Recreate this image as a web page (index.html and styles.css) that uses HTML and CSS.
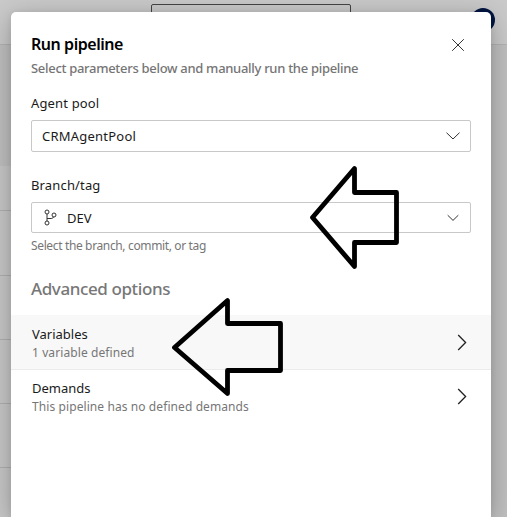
FILE: index.html
```html
<!DOCTYPE html>
<html lang="en">
<head>
<meta charset="utf-8">
<title>Run pipeline</title>
<link rel="stylesheet" href="styles.css">
</head>
<body>
<div class="page">
  <div class="topbar"><div class="search"></div><div class="avatar"></div></div>
  <div class="band"></div>
  <div class="line first"></div>
  <div class="line second"></div>
  <div class="line"></div>
  <div class="line"></div>
  <div class="line"></div>
  <div class="rest"></div>
</div>
<main class="panel">
  <header class="head">
    <div>
      <h1>Run pipeline</h1>
      <p class="subtitle">Select parameters below and manually run the pipeline</p>
    </div>
    <svg class="close" width="14" height="14" viewBox="0 0 14 14"><path d="M1.2 1.2L12.8 12.8M12.8 1.2L1.2 12.8"/></svg>
  </header>
  <section class="field">
    <label>Agent pool</label>
    <div class="select">
      <span class="pool">CRMAgentPool</span>
      <svg class="chevron" width="14" height="8" viewBox="0 0 14 8"><path d="M.5 .7L7 7L13.5 .7"/></svg>
    </div>
  </section>
  <section class="field second">
    <label>Branch/tag</label>
    <div class="select short">
      <svg class="git" width="13" height="17" viewBox="0 0 13 17"><circle cx="3" cy="3" r="2"/><circle cx="3" cy="14" r="2"/><circle cx="10" cy="6" r="2"/><path d="M3 5V12M3 9.5H7.2Q9 9.5 9.5 8"/></svg>
      <span class="dev">DEV</span>
      <svg class="chevron small" width="12" height="8" viewBox="0 0 12 8"><path d="M.7 1.2L6 6.4L11.3 1.2"/></svg>
    </div>
    <p class="help">Select the branch, commit, or tag</p>
  </section>
  <h2>Advanced options</h2>
  <div class="row active">
    <div><p class="name">Variables</p><p class="note">1 variable defined</p></div>
    <svg class="next" width="10" height="17" viewBox="0 0 10 17"><path d="M1.2 1L8.6 8.5L1.2 16"/></svg>
  </div>
  <div class="row">
    <div><p class="name">Demands</p><p class="note">This pipeline has no defined demands</p></div>
    <svg class="next" width="10" height="17" viewBox="0 0 10 17"><path d="M1.2 1L8.6 8.5L1.2 16"/></svg>
  </div>
</main>
<svg class="arrows" width="507" height="517" viewBox="0 0 507 517">
  <path d="M312.5 217.5L354.5 168.5V192.5H396.5V242.5H354.5V266.5Z"/>
  <path d="M174.5 347.5L227.5 300.5V323.5H280.5V370.5H227.5V393.5Z"/>
</svg>
</body>
</html>
```
FILE: styles.css
```css
* { box-sizing: border-box; }
body {
  margin: 0;
  width: 507px;
  height: 517px;
  overflow: hidden;
  position: relative;
  color: #1a1a1a;
  font: 13px/20px "Noto Sans", "Open Sans", sans-serif;
}
h1, h2, p { margin: 0; font-weight: 400; }
svg { fill: none; display: block; flex: none; }

.page { height: 517px; background: #c0c0c0; }
.topbar {
  height: 45px;
  display: flex;
  padding-left: 151px;
  background: #cacaca;
  border-bottom: 1px solid #b3b3b3;
}
.search {
  width: 200px;
  height: 30px;
  margin-top: 4px;
  border: 1px solid #444;
  border-radius: 2px;
}
.avatar {
  width: 24px;
  height: 24px;
  margin: 8px 0 0 120px;
  border-radius: 50%;
  background: #001642;
}
.band { height: 121px; }
.line { width: 240px; height: 64px; border-bottom: 1px solid #b0b0b0; background: #c8c8c8; }
.line.first { height: 45px; }
.line.second { height: 65px; }
.rest { width: 240px; height: 49px; background: #c8c8c8; }

.panel {
  position: absolute;
  left: 11px;
  top: 12px;
  width: 480px;
  height: 505px;
  padding-top: 22px;
  background: #fff;
  border-radius: 5px 5px 0 0;
  box-shadow: 0 6px 28px rgba(0, 0, 0, .28), 0 1px 6px rgba(0, 0, 0, .08);
}
.head { display: flex; justify-content: space-between; padding: 0 26px 0 20px; }
h1 { font-size: 16px; font-weight: 600; letter-spacing: -.45px; color: #000; }
.subtitle { margin-top: 4px; font-weight: 500; color: #757575; letter-spacing: -.3px; white-space: nowrap; }
.close { margin-top: 4px; stroke: #333; stroke-width: 1; }

.field { padding: 0 20px; margin-top: 15px; }
.field.second { margin-top: 23px; }
label { display: block; letter-spacing: .15px; }
.select {
  display: flex;
  align-items: center;
  height: 32px;
  margin-top: 7px;
  padding: 0 10px;
  border: 1px solid #c8c8c8;
  border-radius: 2px;
}
.select.short { height: 31px; padding-left: 12px; }
.pool { letter-spacing: .22px; }
.chevron { margin-left: auto; stroke: #333; stroke-width: 1; }
.chevron.small { margin-right: 1px; }
.git { stroke: #333; stroke-width: 1; margin-right: 10px; }
.help { margin-top: 5px; font-size: 12px; line-height: 16px; letter-spacing: -.36px; color: #767676; }
h2 { margin: 23px 0 14px 20px; font-size: 17px; line-height: 24px; font-weight: 500; letter-spacing: -.4px; color: #777; }

.row {
  display: flex;
  justify-content: space-between;
  height: 54px;
  padding: 9px 24px 0 21px;
}
.row.active { height: 55px; padding-top: 10px; background: #f8f8f8; border-bottom: 1px solid #ebebeb; }
.name { line-height: 18px; }
.note { font-size: 12px; line-height: 20px; letter-spacing: .09px; color: #767676; }
.next { margin-top: 9px; stroke: #222; stroke-width: 1.3; }

.arrows { position: absolute; left: 0; top: 0; stroke: #000; stroke-width: 4.8; stroke-linejoin: round; }
```
